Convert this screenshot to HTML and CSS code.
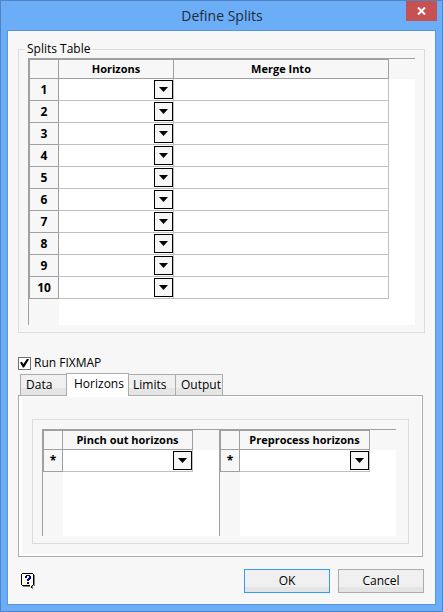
FILE: index.html
```html
<!DOCTYPE html>
<html lang="en">
<head>
  <meta charset="UTF-8" />
  <title>Define Splits</title>
  <link rel="stylesheet" href="styles.css">
</head>
<body>

<div class="window">
  <header class="titlebar">
    <h1>Define Splits</h1>
    <button class="close" type="button" aria-label="Close">
      <svg width="9" height="8" viewBox="0 0 9 8"><path d="M1 0.5 L8 7.5 M8 0.5 L1 7.5" stroke="#fff" stroke-width="2" fill="none"/></svg>
    </button>
  </header>

  <form class="client">
    <fieldset class="splits">
      <legend>Splits Table</legend>
      <div class="grid grid-splits">
        <table>
          <thead>
            <tr><th class="num"></th><th class="col-horizon">Horizons</th><th class="col-merge">Merge Into</th></tr>
          </thead>
          <tbody id="splitsBody"></tbody>
        </table>
      </div>
    </fieldset>

    <label class="check"><input type="checkbox" checked> Run FIXMAP</label>

    <div class="tabs" role="tablist">
      <button class="tab" type="button" role="tab">Data</button>
      <button class="tab active" type="button" role="tab" aria-selected="true">Horizons</button>
      <button class="tab" type="button" role="tab">Limits</button>
      <button class="tab last" type="button" role="tab">Output</button>
    </div>
    <div class="panel" role="tabpanel">
      <div class="panel-inner">
        <div class="group">
          <div class="grid grid-small">
            <table>
              <thead><tr><th class="num"></th><th class="col-list">Pinch out horizons</th></tr></thead>
              <tbody><tr><th>*</th><td><div class="drop"><select aria-label="Pinch out horizon"><option></option></select></div></td></tr></tbody>
            </table>
          </div>
          <div class="grid grid-small">
            <table>
              <thead><tr><th class="num"></th><th class="col-list">Preprocess horizons</th></tr></thead>
              <tbody><tr><th>*</th><td><div class="drop"><select aria-label="Preprocess horizon"><option></option></select></div></td></tr></tbody>
            </table>
          </div>
        </div>
      </div>
    </div>

    <footer class="actions">
      <button class="help" type="button" aria-label="Help">
        <svg width="14" height="16" viewBox="0 0 14 16" shape-rendering="crispEdges">
          <path d="M2 1h11v1h1v11h-2v3h-1v-1h-1v-1H2z" fill="#808080"/>
          <path d="M1 0h11v1h1v11h-1v1h-1v2h-1v-1H9v-1H1v-1H0V1h1z" fill="#000"/>
          <path d="M1 1h11v11h-2v2H9v-2H1z" fill="#fff"/>
          <path d="M2 2h1v1H2zM4 1h1v1H4zM8 1h1v1H8zM10 2h1v1h-1zM2 5h1v1H2zM3 8h1v1H3zM2 10h1v1H2zM5 11h1v1H5zM8 11h1v1H8zM10 9h1v1h-1zM11 6h1v1h-1zM10 12h1v1h-1z" fill="#ffff40"/>
          <path d="M4 3h1V2h4v1h1v3H9v1H8v1H6V6h1V5h1V3H6v2H4zM6 9h2v2H6z" fill="#000090"/>
        </svg>
      </button>
      <button class="btn default" type="submit">OK</button>
      <button class="btn" type="button">Cancel</button>
    </footer>
  </form>
</div>

<script>
  const body = document.getElementById("splitsBody");
  for (let i = 1; i <= 10; i++) {
    const row = document.createElement("tr");
    row.innerHTML = `
      <th>${i}</th>
      <td><div class="drop"><select aria-label="Horizon ${i}"><option></option></select></div></td>
      <td></td>
    `;
    body.appendChild(row);
  }
</script>

</body>
</html>
```
FILE: styles.css
```css
*, *::before, *::after { box-sizing: border-box; }
body { margin: 0; font-family: 'Open Sans', 'Noto Sans', sans-serif; font-size: 12px; line-height: 16px; color: #000; }
button, select, input { font: inherit; color: inherit; margin: 0; padding: 0; }

.window { min-height: 100vh; display: flex; flex-direction: column; background: #6badf6; border: 1px solid #4f83c4; padding: 0 6px 6px; }
.titlebar { display: grid; grid-template-columns: 31px 1fr 31px; height: 29px; margin-right: -1px; }
.titlebar h1 { grid-column: 2; margin: 0; font-size: 14px; font-weight: normal; line-height: 29px; text-align: center; color: #222c38; }
.close { width: 31px; height: 20px; border: none; background: #c75050; display: flex; align-items: center; justify-content: center; }

.client { flex: 1; display: flex; flex-direction: column; background: #f7f7f7; border: 1px solid #5a94db; padding: 10px 10px 11px; }

.splits { margin: 0; min-width: 0; border: 1px solid #dcdcdc; padding: 1px 9px 7px; }
.splits legend { margin-left: -3px; padding: 0 2px; }

.grid {
  border: solid #a0a0a0; border-width: 1px 0 0 1px;
  background: linear-gradient(#f7f7f7, #f7f7f7) 0 0 / 30px 100% no-repeat,
    linear-gradient(#f7f7f7, #f7f7f7) 0 0 / 100% 20px no-repeat, #fff;
}
.grid-splits { height: 267px; }
.grid-small { flex: 1; height: 107px; background-size: 20px 100%, 100% 20px; }
table { border-collapse: separate; border-spacing: 0; table-layout: fixed; border: solid #a0a0a0; border-width: 1px 0 0 1px; }
.grid-splits table { width: 360px; }
.grid-small table { width: 150px; }
th, td { padding: 0; border: solid #c0c0c0; border-width: 0 1px 1px 0; height: 22px; }
th { background: #f7f7f7; border-color: #a0a0a0; font-weight: bold; text-align: center; }
td { background: #fff; }
thead th { height: 19px; font-size: 11px; }
.num { width: 29px; }
.col-horizon { width: 115px; }
.col-merge { width: 215px; }
.grid-small .num { width: 19px; }
.col-list { width: 130px; }

.drop { position: relative; height: 21px; }
.drop select { display: block; appearance: none; width: 100%; height: 21px; border: none; border-radius: 0; background: #fff; }
.drop::before { content: ""; position: absolute; top: 1px; right: 0; width: 19px; height: 19px; border: 1px solid #000; background: #f7f7f7; pointer-events: none; }
.drop::after { content: ""; position: absolute; top: 8px; right: 5px; width: 9px; height: 5px; background: #000; clip-path: polygon(0 0, 100% 0, 50% 100%); pointer-events: none; }

.check { display: flex; align-items: center; gap: 3px; margin-top: 22px; }
.check input { appearance: none; width: 13px; height: 13px; border: 1px solid #707070; background: #fff; display: grid; place-items: center; }
.check input:checked::before { content: ""; width: 9px; height: 9px; background: #000; clip-path: polygon(0 45%, 20% 35%, 38% 60%, 80% 0, 100% 10%, 45% 100%, 32% 100%); }

.tabs { display: flex; align-items: flex-end; margin: 2px 0 -1px 2px; }
.tab { width: 46px; height: 21px; margin-bottom: 1px; padding: 0 0 0 5px; text-align: left; border: 1px solid #acacac; border-right: none; border-bottom: none; background: linear-gradient(#f0f0f0 0 65%, #e5e5e5 65%); }
.tab.active { width: 63px; height: 23px; margin-bottom: 0; padding: 0 0 2px 7px; position: relative; border-right: 1px solid #acacac; background: #fff; }
.tab.active + .tab { border-left: none; padding-left: 4px; }
.tab.last { width: 48px; border-right: 1px solid #acacac; }

.panel { margin-right: 2px; border: 1px solid #acacac; background: #fff; padding: 1px 1px 2px 3px; }
.panel-inner { background: #f7f7f7; padding: 22px 12px 10px 10px; }
.group { display: flex; border: 1px solid #dcdcdc; padding: 9px 12px 7px 9px; }

.actions { display: flex; align-items: center; gap: 8px; margin: auto 1px 0 3px; }
.help { width: 14px; height: 16px; border: none; background: none; margin-right: auto; }
.help svg { display: block; }
.btn { width: 86px; height: 24px; border: 1px solid #acacac; background: linear-gradient(#f0f0f0 0 75%, #e5e5e5 75%); }
.btn.default { border-color: #3399ff; }
```
